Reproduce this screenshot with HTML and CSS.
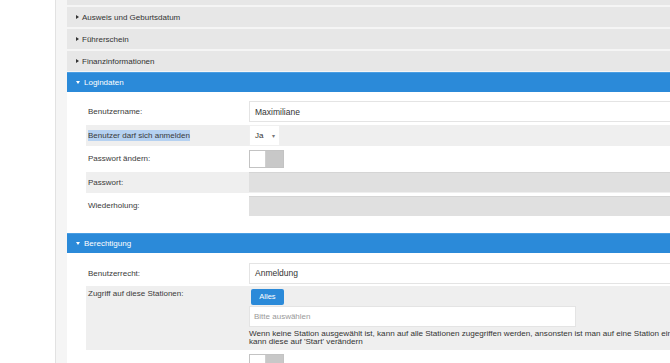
FILE: index.html
```html
<!DOCTYPE html>
<html lang="de">

<head>
    <meta charset="UTF-8">
    <meta name="viewport" content="width=device-width, initial-scale=1.0">
    <title>Benutzer bearbeiten</title>
    <link rel="stylesheet" href="styles.css">
</head>

<body>
    <div class="page">
        <div class="main">
            <!-- Collapsed panels -->
            <div class="panel">
                <div class="panel-heading"></div>
            </div>
            <div class="panel">
                <div class="panel-heading"><span class="caret"></span>Ausweis und Geburtsdatum</div>
            </div>
            <div class="panel">
                <div class="panel-heading"><span class="caret"></span>Führerschein</div>
            </div>
            <div class="panel">
                <div class="panel-heading"><span class="caret"></span>Finanzinformationen</div>
            </div>

            <!-- Login -->
            <div class="panel open">
                <div class="panel-heading"><span class="caret"></span>Logindaten</div>
                <div class="panel-body">
                    <div class="form-row">
                        <label class="row-label">Benutzername:</label>
                        <div class="row-value"><div class="input">Maximiliane</div></div>
                    </div>
                    <div class="form-row shaded">
                        <label class="row-label"><span class="selected">Benutzer darf sich anmelden</span></label>
                        <div class="row-value"><div class="select">Ja<span class="select-arrow">▾</span></div></div>
                    </div>
                    <div class="form-row">
                        <label class="row-label">Passwort ändern:</label>
                        <div class="row-value"><div class="toggle"><span class="knob"></span></div></div>
                    </div>
                    <div class="form-row shaded">
                        <label class="row-label">Passwort:</label>
                        <div class="row-value"><div class="input disabled"></div></div>
                    </div>
                    <div class="form-row">
                        <label class="row-label">Wiederholung:</label>
                        <div class="row-value"><div class="input disabled"></div></div>
                    </div>
                </div>
            </div>

            <!-- Permissions -->
            <div class="panel open">
                <div class="panel-heading"><span class="caret"></span>Berechtigung</div>
                <div class="panel-body">
                    <div class="form-row">
                        <label class="row-label">Benutzerrecht:</label>
                        <div class="row-value"><div class="input">Anmeldung</div></div>
                    </div>
                    <div class="form-row shaded top">
                        <label class="row-label">Zugriff auf diese Stationen:</label>
                        <div class="row-value stack">
                            <button class="btn">Alles</button>
                            <div class="input short placeholder">Bitte auswählen</div>
                            <p class="help">Wenn keine Station ausgewählt ist, kann auf alle Stationen zugegriffen werden, ansonsten ist man auf eine Station eingeschränkt und der Benutzer<br>kann diese auf 'Start' verändern</p>
                        </div>
                    </div>
                    <div class="form-row">
                        <label class="row-label"></label>
                        <div class="row-value"><div class="toggle"><span class="knob"></span></div></div>
                    </div>
                </div>
            </div>
        </div>
    </div>
</body>

</html>
```

FILE: styles.css
```css
body {
    font-family: 'Liberation Sans', Arial, sans-serif;
    font-size: 8px;
    color: #333;
    margin: 0;
    padding: 0;
    background-color: #ffffff;
    overflow: hidden;
}

.page {
    padding-left: 55px;
    width: 840px;
}

.main {
    border-left: 1px solid #e2e2e2;
    background-color: #f5f5f5;
    padding-left: 11px;
    margin-top: -15px;
}

/* Panels */
.panel-heading {
    display: flex;
    align-items: center;
    height: 20px;
    padding-left: 9px;
    margin-bottom: 2px;
    background-color: #e7e7e7;
    color: #333;
}

.caret {
    width: 0;
    height: 0;
    border-left: 3px solid #333;
    border-top: 2.5px solid transparent;
    border-bottom: 2.5px solid transparent;
    margin-right: 3px;
}

.panel.open .panel-heading {
    margin-top: -1px;
    margin-bottom: 0;
    background-color: #2b8ad9;
    border-top: 1px solid #4a9ee3;
    height: 19px;
    color: #ffffff;
}

.panel.open .caret {
    border-top: 3px solid #ffffff;
    border-left: 2.5px solid transparent;
    border-right: 2.5px solid transparent;
    border-bottom: none;
    margin-right: 4px;
}

.panel-body {
    background-color: #ffffff;
    padding: 9px 0 14px 19px;
}

.panel.open + .panel.open .panel-heading {
    margin-top: 0;
}

.panel.open + .panel.open .panel-body {
    padding-top: 10px;
}

/* Form rows */
.form-row {
    display: flex;
    align-items: center;
    min-height: 21px;
    margin-bottom: 2.5px;
}

.form-row.shaded {
    background-color: #efefef;
}

.form-row.top {
    align-items: flex-start;
    margin-top: -0.5px;
}

.row-label {
    width: 161px;
    padding-left: 2px;
    flex-shrink: 0;
    color: #3a3a3a;
}

.form-row.top .row-label {
    padding-top: 3px;
}

.row-value {
    flex: 1;
    display: flex;
}

.row-value.stack {
    flex-direction: column;
    align-items: flex-start;
    padding-top: 3px;
}

.selected {
    background-color: #b5d1f1;
    padding: 1px 0;
}

/* Controls */
.input {
    box-sizing: border-box;
    width: 100%;
    height: 21px;
    padding: 0 5px;
    display: flex;
    align-items: center;
    background-color: #ffffff;
    border: 1px solid #e4e4e4;
    color: #333;
    font-size: 8.5px;
}

.input.disabled {
    height: 20px;
    background-color: #e0e0e0;
    border: none;
    border-top: 1px solid #d5d5d5;
}

.input.short {
    width: 327px;
}

.input.placeholder {
    color: #999;
    font-size: 8px;
    padding-left: 4px;
}

.select {
    box-sizing: border-box;
    width: 31px;
    height: 21px;
    padding-left: 5px;
    display: flex;
    align-items: center;
    background-color: #ffffff;
    border: 1px solid #f0f0f0;
}

.select-arrow {
    font-size: 6px;
    color: #777;
    margin-left: 9px;
}

.toggle {
    box-sizing: border-box;
    width: 35px;
    height: 18px;
    background-color: #c8c8c8;
    border: 1px solid #c3c3c3;
    display: flex;
}

.knob {
    width: 15px;
    background-color: #ffffff;
    border-right: 1px solid #d0d0d0;
}

.btn {
    font-family: inherit;
    font-size: 7.5px;
    color: #ffffff;
    background-color: #2b8ad9;
    border: none;
    border-radius: 2px;
    width: 33px;
    height: 16px;
    margin-left: 2px;
    margin-bottom: 1px;
    padding: 0;
}

.help {
    margin: 3px 0 0;
    line-height: 8.5px;
    font-size: 8.1px;
    color: #333;
    white-space: nowrap;
    padding-bottom: 3px;
}
```
